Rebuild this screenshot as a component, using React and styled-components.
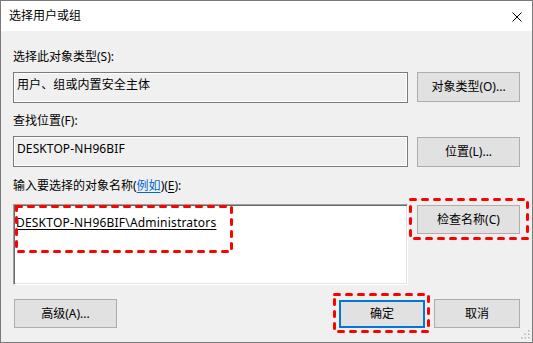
import React from 'react';
import styled, { createGlobalStyle } from 'styled-components';

const GlobalStyle = createGlobalStyle`
  html, body {
    margin: 0;
    padding: 0;
    background: #ffffff;
  }
  * {
    box-sizing: border-box;
  }
`;

const Highlight = ({ left, top, width, height }) => (
  <Dashed
    style={{ left, top }}
    width={width}
    height={height}
    viewBox={`0 0 ${width} ${height}`}
  >
    <rect
      x='1.5'
      y='1.5'
      width={width - 3}
      height={height - 3}
      fill='none'
      stroke='#ff0000'
      strokeWidth='3'
      strokeDasharray='5 7'
      strokeLinecap='round'
    />
  </Dashed>
);

const App = () => {
  return (
    <>
      <GlobalStyle />
      <Window>
        <TitleBar>
          <Title>选择用户或组</Title>
          <CloseIcon viewBox='0 0 10 10'>
            <path d='M0.5 0.5 L9.5 9.5 M9.5 0.5 L0.5 9.5' stroke='#000' strokeWidth='1' />
          </CloseIcon>
        </TitleBar>
        <Body>
          <Section $top={18}>
            <Label>选择此对象类型(S):</Label>
            <Row>
              <Field>用户、组或内置安全主体</Field>
              <Button $w={103} $h={30}>对象类型(O)...</Button>
            </Row>
          </Section>
          <Section $top={10}>
            <Label>查找位置(F):</Label>
            <Row>
              <Field>DESKTOP-NH96BIF</Field>
              <Button $w={103} $h={30} $mt={1}>位置(L)...</Button>
            </Row>
          </Section>
          <Section $top={11}>
            <Label $gap={10}>
              输入要选择的对象名称(<Link>例如</Link>)(<u>E</u>):
            </Label>
            <Row>
              <NamesBox>
                <NameEntry>DESKTOP-NH96BIF\Administrators</NameEntry>
                <Highlight left={1} top={0} width={218} height={48} />
              </NamesBox>
              <Anchor>
                <Button $w={103} $h={29} $mt={1}>检查名称(C)</Button>
                <Highlight left={-8} top={-6} width={120} height={42} />
              </Anchor>
            </Row>
          </Section>
          <Footer>
            <Button $w={103} $h={29} $ml={1}>高级(A)...</Button>
            <ButtonGroup>
              <Anchor>
                <Button $w={86} $h={28} $mt={1} $primary>确定</Button>
                <Highlight left={-6} top={-6} width={97} height={40} />
              </Anchor>
              <Button $w={86} $h={29}>取消</Button>
            </ButtonGroup>
          </Footer>
        </Body>
        <Grip viewBox='0 0 10 10'>
          <rect x='8' y='0' width='1.5' height='1.5' fill='#b8b8b8' />
          <rect x='4.5' y='3.5' width='1.5' height='1.5' fill='#b8b8b8' />
          <rect x='8' y='3.5' width='1.5' height='1.5' fill='#b8b8b8' />
          <rect x='1' y='7' width='1.5' height='1.5' fill='#b8b8b8' />
          <rect x='4.5' y='7' width='1.5' height='1.5' fill='#b8b8b8' />
          <rect x='8' y='7' width='1.5' height='1.5' fill='#b8b8b8' />
        </Grip>
      </Window>
    </>
  );
};

export default App;

const Window = styled.div`
  position: relative;
  width: 533px;
  height: 343px;
  border: 1px solid #7a7a7a;
  background: #f0f0f0;
  display: flex;
  flex-direction: column;
  font-family: 'Noto Sans', 'Noto Sans CJK SC', sans-serif;
  font-size: 12px;
  color: #000;
  overflow: hidden;
`;

const TitleBar = styled.div`
  height: 30px;
  background: #ffffff;
  display: flex;
  align-items: center;
  justify-content: space-between;
  padding: 0 10px 0 8px;
  flex-shrink: 0;
`;

const Title = styled.span`
  font-size: 12px;
  line-height: 16px;
`;

const CloseIcon = styled.svg`
  width: 10px;
  height: 10px;
  margin-top: 1px;
`;

const Body = styled.div`
  flex: 1;
  display: flex;
  flex-direction: column;
  padding: 0 12px 0 12px;
`;

const Section = styled.div`
  display: flex;
  flex-direction: column;
  margin-top: ${({ $top }) => $top}px;
`;

const Label = styled.div`
  line-height: 16px;
  height: 16px;
  margin-bottom: ${({ $gap }) => $gap || 7}px;
  white-space: nowrap;

  u {
    text-decoration: underline;
    text-underline-offset: 2px;
  }
`;

const Link = styled.span`
  color: #0066cc;
  text-decoration: underline;
  text-underline-offset: 2px;
`;

const Row = styled.div`
  display: flex;
  align-items: flex-start;
  gap: 9px;
`;

const Field = styled.div`
  flex: 1;
  height: 31px;
  border: 1px solid #7a7a7a;
  box-shadow: inset 0 0 0 1px #ffffff;
  background: #f0f0f0;
  padding: 4px 3px 0;
  line-height: 16px;
  white-space: nowrap;
  letter-spacing: 0.1px;
`;

const NamesBox = styled.div`
  position: relative;
  flex: 1;
  height: 81px;
  background: #ffffff;
  border-top: 1px solid #a0a0a0;
  border-left: 1px solid #a0a0a0;
  border-right: 1px solid #ffffff;
  border-bottom: 1px solid #ffffff;
  box-shadow: inset 1px 1px 0 #696969, inset -1px -1px 0 #e3e3e3;
  padding: 9px 2px 0;
`;

const NameEntry = styled.span`
  line-height: 16px;
  text-decoration: underline;
  text-underline-offset: 2px;
  white-space: nowrap;
  letter-spacing: 0.2px;
`;

const Anchor = styled.div`
  position: relative;
  display: flex;
`;

const Button = styled.div`
  width: ${({ $w }) => $w}px;
  height: ${({ $h }) => $h}px;
  margin-top: ${({ $mt }) => $mt || 0}px;
  margin-left: ${({ $ml }) => $ml || 0}px;
  flex-shrink: 0;
  display: flex;
  align-items: center;
  justify-content: center;
  background: #e1e1e1;
  border: ${({ $primary }) => ($primary ? '2px solid #0078d7' : '1px solid #adadad')};
  line-height: 16px;
  white-space: nowrap;
`;

const Footer = styled.div`
  display: flex;
  align-items: flex-start;
  justify-content: space-between;
  margin-top: 14px;
`;

const ButtonGroup = styled.div`
  display: flex;
  align-items: flex-start;
  gap: 9px;
`;

const Dashed = styled.svg`
  position: absolute;
  pointer-events: none;
  overflow: visible;
`;

const Grip = styled.svg`
  position: absolute;
  right: 2px;
  bottom: 2px;
  width: 10px;
  height: 10px;
`;
